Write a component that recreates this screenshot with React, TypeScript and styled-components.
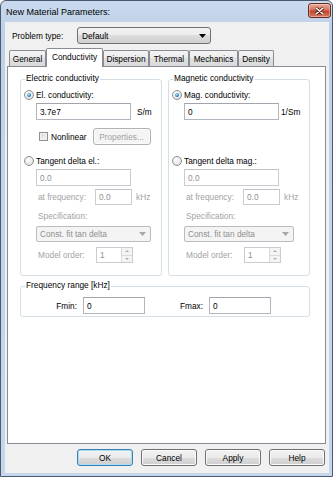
import React from 'react';
import styled, { createGlobalStyle, css } from 'styled-components';

const GlobalStyle = createGlobalStyle`
  html, body {
    margin: 0;
    padding: 0;
    background: #ffffff;
  }
  body {
    font-family: 'Liberation Sans', Arial, sans-serif;
    font-size: 8.3px;
    color: #000000;
  }
  * {
    box-sizing: border-box;
  }
`;

const Window = styled.div`
  width: 333px;
  height: 477px;
  border: 1px solid #4a5a70;
  border-radius: 6px 6px 0 0;
  background: linear-gradient(#cadaee, #bfd1e8 30px, #c6d7ec);
  display: flex;
  flex-direction: column;
  overflow: hidden;
`;

const TitleBar = styled.div`
  height: 21px;
  flex: none;
  display: flex;
  align-items: center;
  padding: 0 1px 0 5px;
`;

const Title = styled.span`
  flex: 1;
  font-size: 9px;
  padding-top: 1px;
`;

const CloseButton = styled.div`
  width: 23px;
  height: 15px;
  margin-bottom: 2px;
  border: 1px solid #6b2b24;
  border-radius: 3px;
  background: linear-gradient(#e8ab9a, #d6735c 45%, #c2432b 55%, #d87a5e);
  box-shadow: inset 0 0 0 1px rgba(255, 255, 255, 0.35);
  display: flex;
  align-items: center;
  justify-content: center;
`;

const Client = styled.div`
  flex: 1;
  margin: 0 3px 3px 4px;
  background: #f0f0f0;
  display: flex;
  flex-direction: column;
`;

const TopRow = styled.div`
  display: flex;
  align-items: center;
  height: 17px;
  margin-top: 5px;
  padding-left: 7px;
`;

const Label = styled.span<{ $w?: number; $right?: boolean; $disabled?: boolean; $ml?: number }>`
  flex: none;
  width: ${({ $w }) => ($w ? `${$w}px` : 'auto')};
  margin-left: ${({ $ml }) => $ml ?? 0}px;
  text-align: ${({ $right }) => ($right ? 'right' : 'left')};
  color: ${({ $disabled }) => ($disabled ? '#a2a2a2' : '#000000')};
  white-space: nowrap;
`;

const DropDown = styled.div`
  width: 134px;
  height: 17px;
  border: 1px solid #707070;
  border-radius: 3px;
  background: linear-gradient(#f2f2f2, #ebebeb 50%, #dddddd 50%, #cfcfcf);
  display: flex;
  align-items: center;
  padding: 0 4px;
  justify-content: space-between;
`;

const TabsBar = styled.div`
  display: flex;
  align-items: flex-end;
  height: 18px;
  margin-top: 4px;
  padding-left: 4px;
  position: relative;
  z-index: 1;
`;

const Tab = styled.div<{ $active?: boolean; $w: number }>`
  width: ${({ $w }) => $w}px;
  height: ${({ $active }) => ($active ? 19 : 16)}px;
  margin-bottom: ${({ $active }) => ($active ? -1 : 0)}px;
  border: 1px solid #898c95;
  border-bottom: none;
  border-radius: 2px 2px 0 0;
  background: ${({ $active }) =>
    $active ? '#ffffff' : 'linear-gradient(#f3f3f3, #ebebeb 50%, #e1e1e1 50%, #d9d9d9)'};
  display: flex;
  align-items: center;
  justify-content: center;
  padding-bottom: ${({ $active }) => ($active ? 3 : 0)}px;
  white-space: nowrap;
`;

const Panel = styled.div`
  flex: 1;
  margin: 0 3px 0 2px;
  border: 1px solid #898c95;
  background: #ffffff;
  padding: 12px 0 0 12px;
`;

const GroupsRow = styled.div`
  display: grid;
  grid-template-columns: 142px 142px;
  gap: 6px;
`;

const Group = styled.div<{ $w?: number; $mt?: number; $pb?: number }>`
  position: relative;
  width: ${({ $w }) => ($w ? `${$w}px` : 'auto')};
  margin-top: ${({ $mt }) => $mt ?? 0}px;
  border: 1px solid #d5dfe5;
  border-radius: 3px;
  display: flex;
  flex-direction: column;
  align-items: flex-start;
  padding-bottom: ${({ $pb }) => $pb ?? 12}px;
`;

const Legend = styled.span`
  position: absolute;
  top: -7px;
  left: 4px;
  padding: 0 1px;
  line-height: 11px;
  background: #ffffff;
  white-space: nowrap;
`;

const RadioRow = styled.div<{ $mt: number }>`
  display: flex;
  align-items: center;
  gap: 2px;
  height: 13px;
  margin-top: ${({ $mt }) => $mt}px;
  padding-left: 3px;
`;

const Radio = styled.span<{ $checked?: boolean }>`
  position: relative;
  flex: none;
  width: 10px;
  height: 10px;
  border-radius: 50%;
  border: 1px solid #8e8f8f;
  background: radial-gradient(circle at 40% 35%, #ffffff, #d6d6d6);
  ${({ $checked }) =>
    $checked &&
    css`
      &::after {
        content: '';
        position: absolute;
        inset: 2px;
        border-radius: 50%;
        background: radial-gradient(circle at 40% 35%, #b8e4fb, #2a84c4 60%, #1b4f7a);
      }
    `}
`;

const FieldRow = styled.div<{ $mt: number; $h: number; $pl: number; $gap?: number }>`
  display: flex;
  align-items: center;
  gap: ${({ $gap }) => $gap ?? 0}px;
  height: ${({ $h }) => $h}px;
  margin-top: ${({ $mt }) => $mt}px;
  padding-left: ${({ $pl }) => $pl}px;
`;

const TextBox = styled.div<{ $w: number; $h: number; $disabled?: boolean; $ml?: number }>`
  flex: none;
  width: ${({ $w }) => $w}px;
  height: ${({ $h }) => $h}px;
  margin-left: ${({ $ml }) => $ml ?? 0}px;
  border: 1px solid ${({ $disabled }) => ($disabled ? '#c9ccd1' : '#b3b6bd')};
  border-top-color: ${({ $disabled }) => ($disabled ? '#bfc2c7' : '#a2a5ac')};
  background: #ffffff;
  color: ${({ $disabled }) => ($disabled ? '#8f8f8f' : '#000000')};
  display: flex;
  align-items: center;
  padding-left: 3px;
`;

const CheckBox = styled.span`
  flex: none;
  width: 9px;
  height: 9px;
  border: 1px solid #8f8f8f;
  background: linear-gradient(135deg, #d8d8d8, #f8f8f8);
  box-shadow: inset 0 0 0 1px #f2f2f2;
`;

const SmallButton = styled.div<{ $disabled?: boolean; $default?: boolean; $ml?: number }>`
  flex: none;
  width: ${({ $disabled }) => ($disabled ? 58 : 56)}px;
  height: 17px;
  margin-left: ${({ $ml }) => $ml ?? 0}px;
  border: 1px solid
    ${({ $disabled, $default }) => ($disabled ? '#adb2b5' : $default ? '#3c7fb1' : '#707070')};
  border-radius: 3px;
  background: ${({ $disabled }) =>
    $disabled ? '#f4f4f4' : 'linear-gradient(#f2f2f2, #ebebeb 50%, #dddddd 50%, #cfcfcf)'};
  box-shadow: ${({ $default }) => ($default ? 'inset 0 0 0 1px #a7dbf6' : 'inset 0 0 0 1px #fbfbfb')};
  color: ${({ $disabled }) => ($disabled ? '#a2a2a2' : '#000000')};
  display: flex;
  align-items: center;
  justify-content: center;
`;

const Spacer = styled.div<{ $h: number }>`
  height: ${({ $h }) => $h}px;
`;

const Combo = styled.div<{ $w: number }>`
  flex: none;
  width: ${({ $w }) => $w}px;
  height: 16px;
  border: 1px solid #b9bcc0;
  border-radius: 2px;
  background: #f4f4f4;
  color: #8f8f8f;
  display: flex;
  align-items: center;
  justify-content: space-between;
  padding: 0 4px 0 3px;
`;

const Spinner = styled.div`
  flex: none;
  width: 37px;
  height: 16px;
  border: 1px solid #c9ccd1;
  background: #ffffff;
  color: #8f8f8f;
  display: flex;
  align-items: center;
  padding-left: 3px;
`;

const SpinValue = styled.span`
  flex: 1;
`;

const SpinButtons = styled.div`
  width: 11px;
  height: 100%;
  display: flex;
  flex-direction: column;
  border-left: 1px solid #dadada;
`;

const SpinHalf = styled.div<{ $up?: boolean }>`
  flex: 1;
  display: flex;
  align-items: center;
  justify-content: center;
  background: #f4f4f4;
  border-bottom: ${({ $up }) => ($up ? '1px solid #dadada' : 'none')};
  &::after {
    content: '';
    border-left: 2px solid transparent;
    border-right: 2px solid transparent;
    ${({ $up }) => ($up ? 'border-bottom: 2px solid #b0b0b0;' : 'border-top: 2px solid #b0b0b0;')}
  }
`;

const ButtonRow = styled.div`
  display: flex;
  justify-content: flex-end;
  gap: 8px;
  height: 17px;
  margin: 5px 0 7px;
  padding-right: 4px;
`;

const Arrow = ({ color }: { color: string }) => (
  <svg width="7" height="4" viewBox="0 0 7 4">
    <path d="M0 0h7L3.5 4z" fill={color} />
  </svg>
);

interface IConductivityGroup {
  title: string;
  mainLabel: string;
  value: string;
  unit: string;
  unitGap: number;
  tangentLabel: string;
  nonlinear?: boolean;
  comboWidth: number;
}

const ConductivityGroup = ({
  title,
  mainLabel,
  value,
  unit,
  unitGap,
  tangentLabel,
  nonlinear,
  comboWidth,
}: IConductivityGroup) => (
  <Group>
    <Legend>{title}</Legend>
    <RadioRow $mt={8}>
      <Radio $checked />
      <Label>{mainLabel}</Label>
    </RadioRow>
    <FieldRow $mt={2} $h={17} $pl={15} $gap={unitGap}>
      <TextBox $w={95} $h={17}>
        {value}
      </TextBox>
      <Label>{unit}</Label>
    </FieldRow>
    {nonlinear ? (
      <FieldRow $mt={8} $h={17} $pl={18} $gap={3}>
        <CheckBox />
        <Label>Nonlinear</Label>
        <SmallButton $disabled $ml={3}>
          Properties...
        </SmallButton>
      </FieldRow>
    ) : (
      <Spacer $h={25} />
    )}
    <RadioRow $mt={9}>
      <Radio />
      <Label>{tangentLabel}</Label>
    </RadioRow>
    <FieldRow $mt={2} $h={17} $pl={15}>
      <TextBox $w={95} $h={17} $disabled>
        0.0
      </TextBox>
    </FieldRow>
    <FieldRow $mt={3} $h={16} $pl={17}>
      <Label $w={57} $disabled>
        at frequency:
      </Label>
      <TextBox $w={37} $h={16} $disabled>
        0.0
      </TextBox>
      <Label $disabled $ml={4}>
        kHz
      </Label>
    </FieldRow>
    <FieldRow $mt={5} $h={12} $pl={17}>
      <Label $disabled>Specification:</Label>
    </FieldRow>
    <FieldRow $mt={4} $h={16} $pl={15}>
      <Combo $w={comboWidth}>
        <span>Const. fit tan delta</span>
        <Arrow color="#a8a8a8" />
      </Combo>
    </FieldRow>
    <FieldRow $mt={5} $h={16} $pl={17}>
      <Label $w={58} $disabled>
        Model order:
      </Label>
      <Spinner>
        <SpinValue>1</SpinValue>
        <SpinButtons>
          <SpinHalf $up />
          <SpinHalf />
        </SpinButtons>
      </Spinner>
    </FieldRow>
  </Group>
);

const tabs = [
  { title: 'General', width: 37 },
  { title: 'Conductivity', width: 57, active: true },
  { title: 'Dispersion', width: 46 },
  { title: 'Thermal', width: 40 },
  { title: 'Mechanics', width: 49 },
  { title: 'Density', width: 36 },
];

export default function App() {
  return (
    <>
      <GlobalStyle />
      <Window>
        <TitleBar>
          <Title>New Material Parameters:</Title>
          <CloseButton>
            <svg width="9" height="8" viewBox="0 0 9 8">
              <path d="M1 1L8 7M8 1L1 7" stroke="#5a1e16" strokeWidth="3" strokeLinecap="round" />
              <path d="M1 1L8 7M8 1L1 7" stroke="#ffffff" strokeWidth="1.6" strokeLinecap="round" />
            </svg>
          </CloseButton>
        </TitleBar>
        <Client>
          <TopRow>
            <Label $w={65}>Problem type:</Label>
            <DropDown>
              <span>Default</span>
              <Arrow color="#000000" />
            </DropDown>
          </TopRow>
          <TabsBar>
            {tabs.map((t) => (
              <Tab key={t.title} $w={t.width} $active={t.active}>
                {t.title}
              </Tab>
            ))}
          </TabsBar>
          <Panel>
            <GroupsRow>
              <ConductivityGroup
                title="Electric conductivity"
                mainLabel="El. conductivity:"
                value="3.7e7"
                unit="S/m"
                unitGap={6}
                tangentLabel="Tangent delta el.:"
                nonlinear
                comboWidth={115}
              />
              <ConductivityGroup
                title="Magnetic conductivity"
                mainLabel="Mag. conductivity:"
                value="0"
                unit="1/Sm"
                unitGap={2}
                tangentLabel="Tangent delta mag.:"
                comboWidth={110}
              />
            </GroupsRow>
            <Group $w={290} $mt={10} $pb={2}>
              <Legend>Frequency range [kHz]</Legend>
              <FieldRow $mt={10} $h={17} $pl={0}>
                <Label $w={56} $right>
                  Fmin:
                </Label>
                <TextBox $w={62} $h={17} $ml={6}>
                  0
                </TextBox>
                <Label $w={58} $right>
                  Fmax:
                </Label>
                <TextBox $w={62} $h={17} $ml={6}>
                  0
                </TextBox>
              </FieldRow>
            </Group>
          </Panel>
          <ButtonRow>
            <SmallButton $default>OK</SmallButton>
            <SmallButton>Cancel</SmallButton>
            <SmallButton>Apply</SmallButton>
            <SmallButton>Help</SmallButton>
          </ButtonRow>
        </Client>
      </Window>
    </>
  );
}
